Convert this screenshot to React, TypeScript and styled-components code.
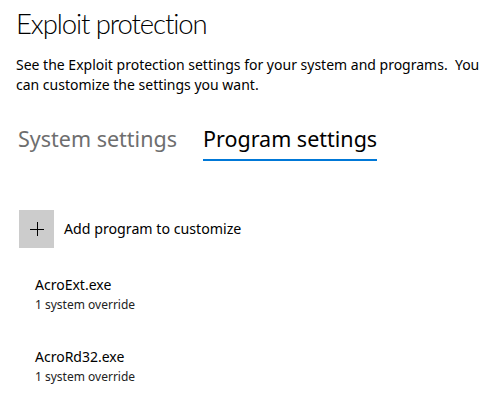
import React from "react";
import styled, { createGlobalStyle } from "styled-components";

const Global = createGlobalStyle`
  html, body { margin: 0; padding: 0; background: #ffffff; }
  body { font-family: "Noto Sans", "Open Sans", sans-serif; color: #000; }
`;

const Page = styled.div`
  padding: 6px 0 0 16px;
  width: 503px;
  box-sizing: border-box;
`;

const Title = styled.h1`
  margin: 0;
  font-family: Lato, "Noto Sans", sans-serif;
  font-size: 27.5px;
  font-weight: 300;
  line-height: 36px;
  letter-spacing: -1.1px;
`;

const Description = styled.p`
  margin: 13px 0 0 0;
  font-size: 14px;
  line-height: 20px;
  width: 480px;
  white-space: pre-wrap;
`;

const Tabs = styled.div`
  display: flex;
  gap: 26px;
  margin-top: 29px;
  padding-left: 2px;
`;

const Tab = styled.div<{ $active?: boolean }>`
  font-size: 21.5px;
  font-weight: 400;
  line-height: 30px;
  color: ${(p) => (p.$active ? "#000" : "#6e6e6e")};
  padding-bottom: 5px;
  border-bottom: 2px solid ${(p) => (p.$active ? "#0078d7" : "transparent")};
`;

const AddRow = styled.div`
  display: flex;
  align-items: center;
  gap: 10px;
  margin-top: 49px;
  padding-left: 3px;
`;

const AddBox = styled.div`
  width: 35px;
  height: 38px;
  background: #cccccc;
  display: flex;
  align-items: center;
  justify-content: center;
`;

const AddLabel = styled.span`
  font-size: 14.2px;
  line-height: 20px;
`;

const List = styled.div`
  display: flex;
  flex-direction: column;
  gap: 32px;
  margin-top: 27px;
  padding-left: 19px;
`;

const Item = styled.div`
  display: flex;
  flex-direction: column;
`;

const ItemName = styled.span`
  font-size: 14px;
  line-height: 20px;
`;

const ItemSub = styled.span`
  font-size: 12px;
  line-height: 20px;
  color: #222;
`;

const items = [
  { name: "AcroExt.exe", sub: "1 system override" },
  { name: "AcroRd32.exe", sub: "1 system override" },
];

export default function App() {
  return (
    <>
      <Global />
      <Page>
        <Title>Exploit protection</Title>
        <Description>
          {"See the Exploit protection settings for your system and programs.  You can customize the settings you want."}
        </Description>
        <Tabs>
          <Tab>System settings</Tab>
          <Tab $active>Program settings</Tab>
        </Tabs>
        <AddRow>
          <AddBox>
            <svg width="16" height="16" viewBox="0 0 16 16">
              <path d="M8 1v14M1 8h14" stroke="#000" strokeWidth="1" shapeRendering="crispEdges" />
            </svg>
          </AddBox>
          <AddLabel>Add program to customize</AddLabel>
        </AddRow>
        <List>
          {items.map((it) => (
            <Item key={it.name}>
              <ItemName>{it.name}</ItemName>
              <ItemSub>{it.sub}</ItemSub>
            </Item>
          ))}
        </List>
      </Page>
    </>
  );
}
